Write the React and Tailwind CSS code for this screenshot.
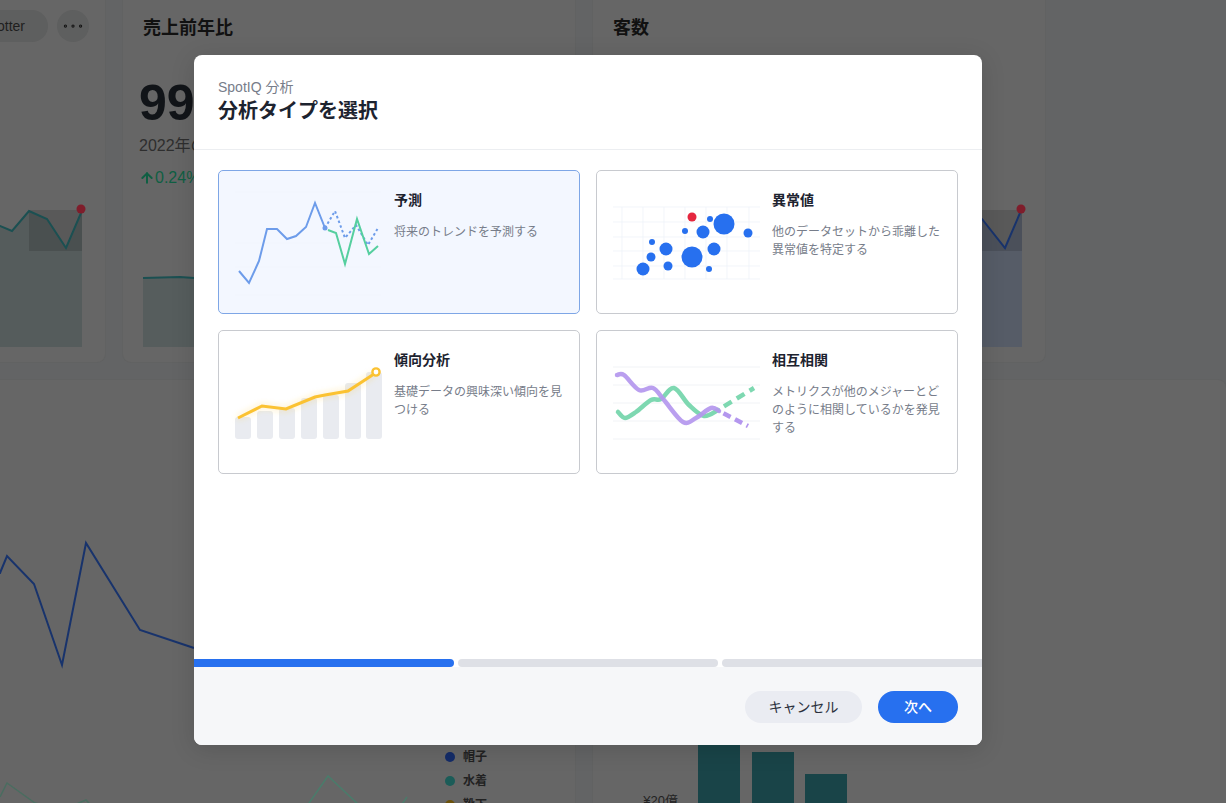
import React from "react";
import { ArrowUp, Ellipsis } from "lucide-react";

const pts = (a) => a.map((p) => p.join(",")).join(" ");

function smooth(p) {
  let d = `M${p[0][0]} ${p[0][1]}`;
  for (let i = 0; i < p.length - 1; i++) {
    const p0 = p[i - 1] || p[i];
    const p1 = p[i];
    const p2 = p[i + 1];
    const p3 = p[i + 2] || p2;
    const c1 = [p1[0] + (p2[0] - p0[0]) / 6, p1[1] + (p2[1] - p0[1]) / 6];
    const c2 = [p2[0] - (p3[0] - p1[0]) / 6, p2[1] - (p3[1] - p1[1]) / 6];
    d += ` C${c1[0]} ${c1[1]} ${c2[0]} ${c2[1]} ${p2[0]} ${p2[1]}`;
  }
  return d;
}

function Forecast() {
  return (
    <svg viewBox="1 1 175 142" className="w-[175px] h-[142px] flex-none">
      {[22, 73, 97, 125].map((y) => (
        <line key={y} x1="17" x2="163" y1={y} y2={y} stroke="#f0f4fc" strokeWidth="0.7" />
      ))}
      <polyline
        points={pts([[107, 58], [117, 41], [127, 68], [138, 55], [150, 75], [160, 58]])}
        fill="none" stroke="#6d9cea" strokeWidth="2" strokeDasharray="2.5 2.5"
      />
      <polyline
        points={pts([[110, 60], [118, 63], [127, 94], [139, 49], [151, 84], [160, 76]])}
        fill="none" stroke="#55cf9f" strokeWidth="2"
      />
      <polyline
        points={pts([[21, 101], [31, 113], [41, 91], [49, 59], [59, 59], [69, 69], [78, 66], [88, 57], [97, 33], [107, 58]])}
        fill="none" stroke="#6d9cea" strokeWidth="2"
      />
      <circle cx="107" cy="58" r="2.5" fill="#6d9cea" />
    </svg>
  );
}

function Outlier() {
  const dots = [
    [114, 49, 3], [128, 54, 10.5], [89, 61, 3], [107, 62, 6.5], [152, 63, 4.5], [56, 72, 3], [70, 79, 6.5],
    [118, 79, 6.5], [96, 87, 10.5], [55, 87, 4.5], [72, 96, 4.5], [113, 99, 3], [47, 99, 6.5],
  ];
  return (
    <svg viewBox="1 1 175 142" className="w-[175px] h-[142px] flex-none">
      {[37, 52, 67, 81, 96, 109].map((y) => (
        <line key={y} x1="17" x2="164" y1={y} y2={y} stroke="#edf1f8" strokeWidth="0.7" />
      ))}
      {[26, 47, 68, 89, 110, 131, 153].map((x) => (
        <line key={x} x1={x} x2={x} y1="37" y2="109" stroke="#edf1f8" strokeWidth="0.7" />
      ))}
      {dots.map(([x, y, r]) => (
        <circle key={`${x}-${y}`} cx={x} cy={y} r={r} fill="#2770ef" />
      ))}
      <circle cx="96" cy="47" r="4.5" fill="#e5273f" />
    </svg>
  );
}

function Trend() {
  const bars = [[17, 87], [39, 81], [61, 78], [83, 68], [105, 65], [127, 53], [148, 42]];
  const line = pts([[20, 88], [44, 76], [68, 79], [97, 67], [107, 65], [130, 61], [156, 44]]);
  return (
    <svg viewBox="1 1 175 142" className="w-[175px] h-[142px] flex-none">
      <defs>
        <filter id="glow" x="-20%" y="-40%" width="140%" height="180%">
          <feGaussianBlur stdDeviation="3" />
        </filter>
      </defs>
      {bars.map(([x, y]) => (
        <rect key={x} x={x} y={y} width="16" height={109 - y} rx="3" fill="#e9ebf0" />
      ))}
      <polyline points={line} fill="none" stroke="#fbc232" strokeOpacity="0.4" strokeWidth="3" filter="url(#glow)" />
      <polyline points={line} fill="none" stroke="#fbc232" strokeWidth="3" />
      <circle cx="158" cy="42" r="3.6" fill="#ffffff" stroke="#fbc232" strokeWidth="2.4" />
    </svg>
  );
}

function Correlation() {
  const purple = [[21, 45], [28, 45], [43, 60], [57, 58], [68, 70], [87, 92], [100, 88], [115, 78], [123, 81]];
  const green = [[22, 82], [29, 88], [40, 82], [55, 70], [65, 69], [78, 58], [93, 75], [108, 86], [122, 80]];
  return (
    <svg viewBox="1 1 175 142" className="w-[175px] h-[142px] flex-none">
      {[37, 55, 73, 91, 109].map((y) => (
        <line key={y} x1="17" x2="164" y1={y} y2={y} stroke="#eef0f4" strokeWidth="0.8" />
      ))}
      <path d={smooth(green)} fill="none" stroke="#7ed8b1" strokeWidth="4.5" strokeLinecap="round" />
      <line x1="122" y1="80" x2="158" y2="58" stroke="#7ed8b1" strokeWidth="4.5" strokeLinecap="butt" strokeDasharray="9 6" strokeDashoffset="-7" />
      <path d={smooth(purple)} fill="none" stroke="#b497ee" strokeOpacity="0.92" strokeWidth="4.5" strokeLinecap="round" />
      <line x1="123" y1="81" x2="152" y2="96" stroke="#b497ee" strokeWidth="4.5" strokeLinecap="butt" strokeDasharray="8 5" strokeDashoffset="-5" />
    </svg>
  );
}

const options = [
  { title: "予測", desc: "将来のトレンドを予測する", Art: Forecast, active: true },
  { title: "異常値", desc: "他のデータセットから乖離した異常値を特定する", Art: Outlier },
  { title: "傾向分析", desc: "基礎データの興味深い傾向を見つける", Art: Trend },
  { title: "相互相関", desc: "メトリクスが他のメジャーとどのように相関しているかを発見する", Art: Correlation },
];

function OptionCard({ title, desc, Art, active }) {
  return (
    <div
      className={
        active
          ? "flex rounded-[5px] border border-[#7ea6e6] bg-[#f3f7ff]"
          : "flex rounded-[5px] border border-[#c8cacf] bg-white"
      }
    >
      <Art />
      <div className="flex-1 pr-[16px] pt-[19px]">
        <div className="text-[14px] leading-[20px] font-bold text-[#1d232f]">{title}</div>
        <p className="mt-[13px] text-[12px] leading-[18px] text-[#777d8a]">{desc}</p>
      </div>
    </div>
  );
}

function Modal() {
  return (
    <div className="absolute left-[194px] top-[55px] flex h-[690px] w-[788px] flex-col overflow-hidden rounded-lg bg-white shadow-[0_4px_24px_rgba(0,0,0,0.14)]">
      <div className="h-[95px] flex-none border-b border-[#eceef1] px-6 pt-[22px]">
        <div className="text-[14px] leading-[20px] text-[#777d8a]">SpotIQ 分析</div>
        <div className="text-[20px] leading-[28px] font-bold text-[#1d232f]">分析タイプを選択</div>
      </div>
      <div className="grid flex-1 grid-cols-2 content-start auto-rows-[144px] gap-4 px-6 pt-5">
        {options.map((o) => (
          <OptionCard key={o.title} {...o} />
        ))}
      </div>
      <div className="flex h-2 flex-none gap-1">
        <div className="flex-1 rounded-r-full bg-[#2770ef]" />
        <div className="flex-1 rounded-full bg-[#dee0e6]" />
        <div className="flex-1 rounded-l-full bg-[#dee0e6]" />
      </div>
      <div className="flex h-[78px] flex-none items-center justify-end gap-4 bg-[#f6f7f9] px-6 pt-[2px]">
        <button className="h-8 w-[117px] rounded-full bg-[#eaecf2] text-[14px] text-[#2b313d]">キャンセル</button>
        <button className="h-8 w-20 rounded-full bg-[#2770ef] text-[14px] font-medium text-white">次へ</button>
      </div>
    </div>
  );
}

function TopCard({ vb, children, header }) {
  return (
    <div className="flex h-[362px] w-[452px] flex-none flex-col overflow-hidden rounded-b-lg bg-[#666666] shadow-[0_0_0_1px_#616262]">
      <div className="h-[202px] flex-none">{header}</div>
      <svg viewBox={vb} className="h-[160px] w-[452px] flex-none">
        {children}
      </svg>
    </div>
  );
}

function Background() {
  return (
    <div className="flex h-[803px] w-[1226px] flex-col gap-[18px] overflow-hidden bg-[#636465]">
      <div className="ml-[-347px] flex flex-none gap-[18px]">
        <TopCard
          vb="-347 202 452 160"
          header={
            <div className="flex items-center justify-end gap-[9px] pr-[16px] pt-[10px]">
              <div className="flex h-8 w-[140px] items-center justify-end rounded-full bg-[#5e5f5f] pr-[23px] text-[14px] text-[#1e1e1e]">
                Spotter
              </div>
              <div className="flex h-8 w-8 items-center justify-center rounded-full bg-[#5e5f5f] text-[#141414]">
                <Ellipsis size={26} strokeWidth={1} />
              </div>
            </div>
          }
        >
          <polygon points="-347,347 -347,226 0,226 12,231 29,211 47,219 66,248 81,213 82,213 82,347" fill="#555c5c" />
          <rect x="29" y="210" width="53" height="41" fill="#000000" fillOpacity="0.12" />
          <polyline points="-347,226 0,226 12,231 29,211 47,219 66,248 81,213" fill="none" stroke="#1b5052" strokeWidth="2" />
          <circle cx="81" cy="209" r="4.5" fill="#7f1d2b" />
        </TopCard>
        <TopCard
          vb="123 202 452 160"
          header={
            <div className="px-4 pt-[14px]">
              <div className="pl-1 text-[18px] leading-[28px] font-bold text-[#111111]">売上前年比</div>
              <div className="mt-[30px] text-[50px] leading-[62px] font-bold text-[#111418]">99.76%</div>
              <div className="text-[16px] leading-[24px] text-[#2e2e2e]">2022年の売上</div>
              <div className="mt-[8px] flex items-center text-[16px] leading-[24px] text-[#0f5f43]">
                <ArrowUp size={16} strokeWidth={3} />
                <span>0.24%</span>
              </div>
            </div>
          }
        >
          <polygon points="143,347 143,278 180,277 194,278 555,278 555,347" fill="#565d5d" />
          <polyline points="143,278 180,277 194,278 555,278" fill="none" stroke="#1b5052" strokeWidth="2" />
        </TopCard>
        <TopCard
          vb="593 202 452 160"
          header={
            <div className="px-4 pt-[14px]">
              <div className="pl-1 text-[18px] leading-[28px] font-bold text-[#111111]">客数</div>
            </div>
          }
        >
          <polygon points="613,347 613,278 982,219 1005,248 1020,213 1022,213 1022,347" fill="#565c67" />
          <rect x="960" y="210" width="62" height="41" fill="#000000" fillOpacity="0.12" />
          <polyline points="960,210 975,216 982,219 1005,248 1020,213" fill="none" stroke="#18336c" strokeWidth="2" />
          <circle cx="1021" cy="209" r="4.5" fill="#7f1d2b" />
        </TopCard>
      </div>
      <div className="ml-[-347px] flex flex-1 gap-[18px]">
        <div className="flex w-[922px] flex-none overflow-hidden rounded-t-lg bg-[#666666] shadow-[0_0_0_1px_#616262]">
          <svg viewBox="-347 380 792 423" className="h-[423px] w-[792px] flex-none">
            <polyline points="-347,600 0,573 7,556 34,584 62,665 86,543 140,630 194,648" fill="none" stroke="#18336c" strokeWidth="2" />
            <polyline points="0,797 7,783 35,803 62,810 86,800 100,815" fill="none" stroke="#4a6d60" strokeWidth="1.5" />
            <polyline points="300,816 328,776 360,806" fill="none" stroke="#4a7c6b" strokeWidth="1.5" />
            <polyline points="398,810 407,797" fill="none" stroke="#4a7c6b" strokeWidth="1.5" />
          </svg>
          <div className="flex flex-col gap-[8px] pt-[369px] text-[12px] leading-[16px] font-bold text-[#222222]">
            {[
              ["帽子", "bg-[#142c68]"],
              ["水着", "bg-[#1b5c58]"],
              ["靴下", "bg-[#6b520c]"],
            ].map(([label, color]) => (
              <div key={label} className="flex items-center gap-2">
                <span className={`h-[10px] w-[10px] rounded-full ${color}`} />
                <span>{label}</span>
              </div>
            ))}
          </div>
        </div>
        <div className="flex-1 overflow-hidden rounded-t-lg bg-[#666666] shadow-[0_0_0_1px_#616262]">
          <svg viewBox="593 380 633 423" className="h-[423px] w-[633px]">
            <rect x="698" y="700" width="42" height="103" fill="#194448" />
            <rect x="752" y="752" width="42" height="51" fill="#194448" />
            <rect x="805" y="774" width="42" height="29" fill="#194448" />
            <text x="678" y="805" textAnchor="end" fontSize="13" fill="#222222">¥20億</text>
          </svg>
        </div>
      </div>
    </div>
  );
}

export default function App() {
  return (
    <div className="relative h-[803px] w-[1226px] overflow-hidden font-[family-name:'Liberation_Sans','Noto_Sans_CJK_JP',sans-serif]">
      <Background />
      <Modal />
    </div>
  );
}
